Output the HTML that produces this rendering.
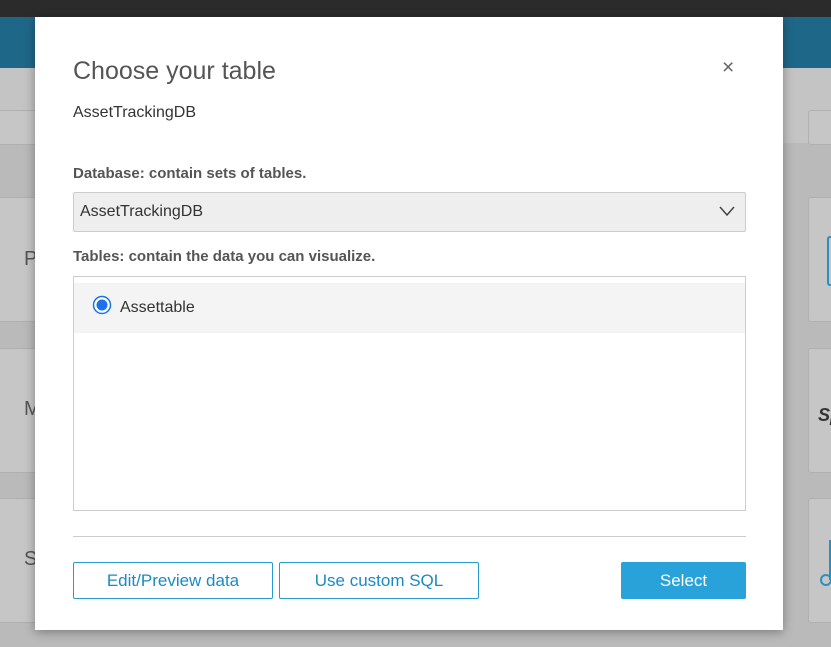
<!DOCTYPE html>
<html><head><style>
body{margin:0;width:831px;height:647px;overflow:hidden;background:#bababa;font-family:"Liberation Sans",sans-serif;position:relative}
.a{position:absolute}
.card{position:absolute;background:#c6c6c6;border:1px solid #b0b0b0;border-radius:3px}
</style></head><body>
<div class="a" style="left:0;top:0;width:831px;height:17px;background:#2b2b2b"></div>
<div class="a" style="left:0;top:17px;width:831px;height:51px;background:#1f6789"></div>
<div class="a" style="left:0;top:68px;width:831px;height:75px;background:#c4c4c4"></div>
<div class="card" style="left:-5px;top:110px;width:40px;height:33px"></div>
<div class="card" style="left:808px;top:110px;width:30px;height:33px"></div>
<div class="card" style="left:-5px;top:197px;width:40px;height:123px"></div>
<div class="card" style="left:-5px;top:348px;width:40px;height:123px"></div>
<div class="card" style="left:-5px;top:498px;width:40px;height:123px"></div>
<div class="card" style="left:808px;top:197px;width:30px;height:123px"></div>
<div class="card" style="left:808px;top:348px;width:30px;height:123px"></div>
<div class="card" style="left:808px;top:498px;width:30px;height:123px"></div>
<div class="a" style="left:24px;top:248px;font-size:20px;color:#555">P</div>
<div class="a" style="left:24px;top:398px;font-size:20px;color:#555">M</div>
<div class="a" style="left:24px;top:548px;font-size:20px;color:#555">S</div>
<div class="a" style="left:818px;top:405px;font-size:18px;font-weight:bold;font-style:italic;color:#333">Sp</div>
<div class="a" style="left:827px;top:236px;width:8px;height:46px;border:2px solid #2a8fc0;border-radius:3px"></div>
<div class="a" style="left:829px;top:540px;width:6px;height:40px;background:#2a8fc0"></div>
<div class="a" style="left:820px;top:574px;width:8px;height:8px;border:2px solid #2a8fc0;border-radius:50%"></div>
<div class="a" style="left:35px;top:17px;width:748px;height:613px;background:#fff;box-shadow:0 2px 10px rgba(0,0,0,.35)"></div>
<div class="a" style="left:73px;top:57px;font-size:25px;color:#555">Choose your table</div>
<div class="a" style="left:722px;top:56px;font-size:21px;color:#666">×</div>
<div class="a" style="left:73px;top:104px;font-size:16px;color:#333">AssetTrackingDB</div>
<div class="a" style="left:73px;top:165px;font-size:15px;font-weight:bold;color:#555">Database: contain sets of tables.</div>
<div class="a" style="left:73px;top:192px;width:671px;height:38px;background:#eee;border:1px solid #ccc;border-radius:2px"></div>
<div class="a" style="left:80px;top:203px;font-size:16px;color:#333">AssetTrackingDB</div>
<svg class="a" style="left:718px;top:205px" width="18" height="12"><path d="M2 2L9 10L16 2" fill="none" stroke="#444" stroke-width="1.5"/></svg>
<div class="a" style="left:73px;top:248px;font-size:15px;font-weight:bold;color:#555">Tables: contain the data you can visualize.</div>
<div class="a" style="left:73px;top:276px;width:671px;height:233px;border:1px solid #ccc"></div>
<div class="a" style="left:74px;top:283px;width:671px;height:50px;background:#f4f4f4"></div>
<svg class="a" style="left:92px;top:295px" width="20" height="20"><circle cx="10" cy="10" r="8.5" fill="#fff" stroke="#1a73e8" stroke-width="1.5"/><circle cx="10" cy="10" r="5.5" fill="#1a73e8"/></svg>
<div class="a" style="left:120px;top:299px;font-size:16px;color:#333">Assettable</div>
<div class="a" style="left:73px;top:536px;width:673px;height:1px;background:#ccc"></div>
<div class="a" style="left:73px;top:562px;width:198px;height:35px;border:1px solid #2a9bd0;border-radius:2px;color:#1a8ac4;font-size:17px;text-align:center;line-height:35px">Edit/Preview data</div>
<div class="a" style="left:279px;top:562px;width:198px;height:35px;border:1px solid #2a9bd0;border-radius:2px;color:#1a8ac4;font-size:17px;text-align:center;line-height:35px">Use custom SQL</div>
<div class="a" style="left:621px;top:562px;width:125px;height:37px;background:#28a2d8;border-radius:2px;color:#fff;font-size:17px;text-align:center;line-height:37px">Select</div>
</body></html>
